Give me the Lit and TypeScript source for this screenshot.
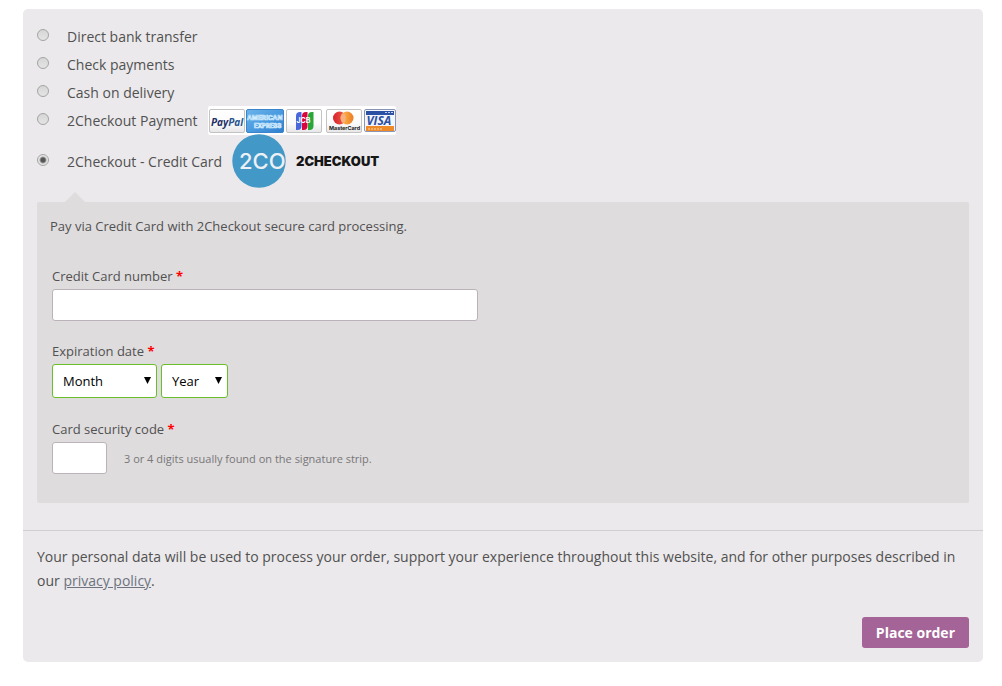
import { LitElement, html, svg, css } from "lit";
import { customElement, state } from "lit/decorators.js";

@customElement("card-strip")
class CardStrip extends LitElement {
  static styles = css`
    :host {
      display: block;
    }
    svg {
      display: block;
    }
    text {
      font-family: "Open Sans", sans-serif;
      font-weight: 700;
    }
    .inter {
      font-family: Inter, sans-serif;
    }
  `;

  private frame(x: number) {
    return svg`<rect x=${x + 0.5} y="3.5" width="35" height="23" rx="1.5" fill="url(#paper)" stroke="#c3c3c3"/>`;
  }

  render() {
    return html`
      <svg width="189" height="30" viewBox="0 0 189 30" role="img" aria-label="PayPal, American Express, JCB, MasterCard, Visa">
        <defs>
          <linearGradient id="paper" x1="0" y1="0" x2="0" y2="1">
            <stop offset="0" stop-color="#ffffff" />
            <stop offset="0.6" stop-color="#fbfbfb" />
            <stop offset="1" stop-color="#e6e6e8" />
          </linearGradient>
          <linearGradient id="amex" x1="0" y1="0" x2="1" y2="1">
            <stop offset="0" stop-color="#6db4ea" />
            <stop offset="0.5" stop-color="#4b9be0" />
            <stop offset="1" stop-color="#2f7fd0" />
          </linearGradient>
          <linearGradient id="mcRed" x1="0" x2="1">
            <stop offset="0" stop-color="#d8232c" />
            <stop offset="1" stop-color="#f0604a" />
          </linearGradient>
          <linearGradient id="mcGold" x1="0" x2="1">
            <stop offset="0" stop-color="#fbc455" />
            <stop offset="1" stop-color="#ef7a22" />
          </linearGradient>
        </defs>
        <rect width="188" height="29" rx="2" fill="#ffffff" />
        ${this.frame(1)}
        <text x="3" y="20" font-size="10" font-style="italic" font-weight="800" fill="#1f2f66">Pay<tspan fill="#27548f">Pal</tspan></text>

        <rect x="38.5" y="3.5" width="37" height="23" rx="1.5" fill="url(#amex)" stroke="#3c84c9" />
        <text class="inter" x="39" y="14" font-size="6.5" fill="#4b9be0" stroke="#d8efff" stroke-width="0.7">AMERICAN</text>
        <text class="inter" x="46" y="22" font-size="6" fill="#4b9be0" stroke="#d8efff" stroke-width="0.7">EXPRESS</text>

        ${this.frame(78)}
        <path d="M88 10q0-4 4-4h1.500v14q0 4-4 4h-1.500z" fill="#4a68dc" />
        <path d="M94 10q0-4 4-4h1.500v14q0 4-4 4h-1.500z" fill="#d8063c" />
        <path d="M100 10q0-4 4-4h1.500v14q0 4-4 4h-1.500z" fill="#2ba53a" />
        <text class="inter" x="88.500" y="17" font-size="7" fill="#ffffff">JCB</text>

        ${this.frame(118)}
        <circle cx="131.5" cy="12" r="6.5" fill="url(#mcRed)" />
        <circle cx="139" cy="12" r="6.5" fill="url(#mcGold)" />
        <path d="M135.3 6.7a6.5 6.5 0 0 1 0 10.600a6.500 6.500 0 0 1 0-10.600z" fill="#f8a070" />
        <path d="M133.5 9h3.600M133 11h4.600M133 13h4.600M133.500 15h3.600" stroke="#fbd8a8" stroke-width="0.6" />
        <text class="inter" x="121" y="24" font-size="5.4" fill="#222222">MasterCard</text>

        <rect x="156.5" y="3.5" width="31" height="22" rx="1.5" fill="#f4f5fa" stroke="#8a94b4" />
        <path d="M158 5h28v4h-28z" fill="#2c51a4" />
        <path d="M177 6.5h2M180 6.5h2M183 6.5h2" stroke="#bccbf0" />
        <path d="M158 20h28v5h-28z" fill="#ee8a28" />
        <path d="M160 23h15" stroke="#ffd9a8" stroke-dasharray="2 1" />
        <text x="158.5" y="19" font-size="12" font-style="italic" font-weight="800" fill="#2c51a4">VISA</text>
      </svg>
    `;
  }
}

@customElement("checkout-logo")
class CheckoutLogo extends LitElement {
  static styles = css`
    :host,
    svg {
      display: block;
    }
    .mark {
      font-family: Inter, sans-serif;
      font-weight: 500;
      font-size: 22px;
    }
    .name {
      font-family: Inter, sans-serif;
      font-weight: 900;
      font-size: 13px;
    }
  `;

  render() {
    return html`
      <svg width="160" height="54" viewBox="0 0 160 54" role="img" aria-label="2Checkout">
        <defs>
          <clipPath id="disc"><rect width="54" height="54" /></clipPath>
        </defs>
        <g clip-path="url(#disc)">
          <circle cx="27" cy="27" r="26.7" fill="#4298c6" />
          <text class="mark" x="7" y="35" fill="#edf1f5">2CO</text>
        </g>
        <text class="name" x="64" y="32" fill="#161616">2CHECKOUT</text>
      </svg>
    `;
  }
}

@customElement("app-root")
class AppRoot extends LitElement {
  static styles = css`
    :host {
      display: block;
      padding: 9px 19px 24px 23px;
      font-family: "Open Sans", sans-serif;
      font-size: 14px;
      line-height: 24px;
      color: #515151;
    }
    * {
      box-sizing: border-box;
    }
    .payment {
      background: #ebe9eb;
      border-radius: 5px;
    }
    .methods {
      list-style: none;
      margin: 0;
      padding: 14px 14px 27px;
      border-bottom: 1px solid #d3ced2;
    }
    .method {
      display: flex;
      align-items: center;
      min-height: 28px;
    }
    .method label {
      display: flex;
      align-items: center;
    }
    .method card-strip {
      margin-left: 10px;
      margin-block: -2px;
    }
    .method checkout-logo {
      margin-left: 10px;
      margin-top: -1px;
    }
    .radio {
      appearance: none;
      width: 12px;
      height: 12px;
      margin: 0 18px 4px 0;
      border: 1px solid #a4a4a4;
      border-radius: 50%;
      background: linear-gradient(#d6d6d6, #e4e4e4);
    }
    .radio:checked {
      background: radial-gradient(circle, #555555 0 2px, #e6e6e6 4px);
    }
    .box {
      position: relative;
      margin-top: 14px;
      padding: 12px 15px 29px;
      background: #dfdcde;
      border-radius: 2px;
      font-size: 13px;
    }
    .box::before {
      content: "";
      position: absolute;
      top: -10px;
      left: 28px;
      border: solid transparent;
      border-width: 0 10px 10px;
      border-bottom-color: #dfdcde;
    }
    .intro {
      margin: 0 -2px 26px;
    }
    .field {
      display: flex;
      flex-direction: column;
      align-items: flex-start;
      margin-bottom: 18px;
    }
    .field:last-child {
      margin-bottom: 0;
    }
    .label {
      line-height: 25px;
    }
    .required {
      color: #ff0000;
      font-weight: 700;
    }
    .text {
      height: 32px;
      padding: 0 8px;
      border: 1px solid #bbb3b9;
      border-radius: 3px;
      background: #ffffff;
      font: inherit;
    }
    .number {
      width: 426px;
      max-width: 100%;
    }
    .code {
      width: 55px;
    }
    .row {
      display: flex;
      align-items: center;
      gap: 4px;
    }
    .picker {
      position: relative;
      display: flex;
      padding-bottom: 1px;
    }
    .picker svg {
      position: absolute;
      right: 6px;
      top: 13px;
      pointer-events: none;
    }
    .select {
      appearance: none;
      height: 34px;
      padding: 0 11px 0 10px;
      border: 1px solid #69bf29;
      border-radius: 3px;
      background: #ffffff;
      color: #000000;
      font: inherit;
    }
    .month {
      width: 105px;
    }
    .year {
      width: 67px;
    }
    .hint {
      margin-left: 13px;
      padding-top: 2px;
      font-size: 11px;
      color: #777777;
    }
    .footer {
      display: flex;
      flex-direction: column;
      align-items: flex-end;
      gap: 24px;
      padding: 14px;
    }
    .privacy {
      margin: 0;
      width: 100%;
    }
    .privacy a {
      color: #6d7480;
    }
    .order {
      height: 31px;
      padding: 0 14px;
      border: 0;
      border-radius: 3px;
      background: #a46497;
      color: #ffffff;
      font: inherit;
      font-weight: 700;
    }
  `;

  @state() private selected = "card";

  private methods = [
    { id: "bank", name: "Direct bank transfer", logo: "" },
    { id: "check", name: "Check payments", logo: "" },
    { id: "cash", name: "Cash on delivery", logo: "" },
    { id: "twoco", name: "2Checkout Payment", logo: html`<card-strip></card-strip>` },
    { id: "card", name: "2Checkout - Credit Card", logo: html`<checkout-logo></checkout-logo>` },
  ];

  private picker(id: string, name: string, options: string[]) {
    return html`
      <div class="picker">
        <select class="select ${id}" id=${id} aria-label="Expiration ${id}">
          <option>${name}</option>
          ${options.map((o) => html`<option>${o}</option>`)}
        </select>
        <svg width="7" height="7" viewBox="0 0 7 7"><path d="M0 0h7L3.5 7z" fill="#000000" /></svg>
      </div>
    `;
  }

  render() {
    const star = html`<span class="required">*</span>`;
    return html`
      <form class="payment" @submit=${(e: Event) => e.preventDefault()}>
        <ul class="methods">
          ${this.methods.map(
            (m) => html`
              <li class="method">
                <input
                  class="radio"
                  type="radio"
                  name="method"
                  id=${m.id}
                  .checked=${this.selected === m.id}
                  @change=${() => (this.selected = m.id)}
                />
                <label for=${m.id}>${m.name}${m.logo}</label>
              </li>
            `
          )}
          <li class="box">
            <p class="intro">Pay via Credit Card with 2Checkout secure card processing.</p>
            <div class="field">
              <label class="label" for="number">Credit Card number ${star}</label>
              <input class="text number" id="number" type="text" autocomplete="off" />
            </div>
            <div class="field">
              <label class="label" for="month">Expiration date ${star}</label>
              <div class="row">
                ${this.picker("month", "Month", ["01", "02", "03", "04", "05", "06", "07", "08", "09", "10", "11", "12"])}
                ${this.picker("year", "Year", ["2019", "2020", "2021", "2022", "2023", "2024"])}
              </div>
            </div>
            <div class="field">
              <label class="label" for="code">Card security code ${star}</label>
              <div class="row">
                <input class="text code" id="code" type="text" autocomplete="off" />
                <span class="hint">3 or 4 digits usually found on the signature strip.</span>
              </div>
            </div>
          </li>
        </ul>
        <div class="footer">
          <p class="privacy">
            Your personal data will be used to process your order, support your experience throughout this website, and
            for other purposes described in our <a href="#privacy">privacy policy</a>.
          </p>
          <button class="order" type="submit">Place order</button>
        </div>
      </form>
    `;
  }
}
